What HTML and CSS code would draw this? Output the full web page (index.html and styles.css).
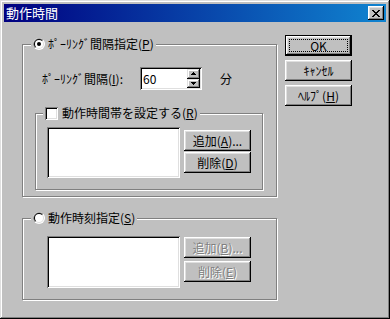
FILE: index.html
```html
<!DOCTYPE html>
<html lang="ja">
<head>
<meta charset="utf-8">
<title>動作時間</title>
<link rel="stylesheet" href="styles.css">
</head>
<body>
<div class="window">
  <div class="titlebar">
    <span class="title">動作時間</span>
    <span class="close">
      <svg width="8" height="7" viewBox="0 0 8 7" shape-rendering="crispEdges"><path d="M0 0h2v1H0zM6 0h2v1H6zM1 1h2v1H1zM5 1h2v1H5zM2 2h4v1H2zM3 3h2v1H3zM2 4h4v1H2zM1 5h2v1H1zM5 5h2v1H5zM0 6h2v1H0zM6 6h2v1H6z" fill="#000"/></svg>
    </span>
  </div>
  <div class="body">
    <div class="left">
      <div class="group g1">
        <div class="legend">
          <svg class="radio" width="12" height="12" viewBox="0 0 12 12"><circle cx="6" cy="6" r="6" fill="#fff"/><path d="M1.76 10.24A6 6 0 0 1 10.24 1.76L6 6Z" fill="#808080"/><circle cx="6" cy="6" r="5" fill="#dfdfdf"/><path d="M2.46 9.54A5 5 0 0 1 9.54 2.46L6 6Z" fill="#000"/><circle cx="6" cy="6" r="4" fill="#fff"/><circle cx="6" cy="6" r="2" fill="#000"/></svg>
          <span class="txt">ﾎﾟｰﾘﾝｸﾞ間隔指定(<u>P</u>)</span>
        </div>
        <div class="row">
          <span class="lbl">ﾎﾟｰﾘﾝｸﾞ間隔(<u>I</u>):</span>
          <div class="edit">
            <span class="val">60</span>
            <div class="spin">
              <span class="sb up"><svg width="5" height="3" viewBox="0 0 5 3" shape-rendering="crispEdges"><path d="M2 0h1v1H2zM1 1h3v1H1zM0 2h5v1H0z" fill="#000"/></svg></span>
              <span class="sb down"><svg width="5" height="3" viewBox="0 0 5 3" shape-rendering="crispEdges"><path d="M0 0h5v1H0zM1 1h3v1H1zM2 2h1v1H2z" fill="#000"/></svg></span>
            </div>
          </div>
          <span class="unit">分</span>
        </div>
        <div class="group inner">
          <div class="legend cb-legend">
            <span class="checkbox"></span>
            <span class="txt">動作時間帯を設定する(<u>R</u>)</span>
          </div>
          <div class="content c1">
            <div class="listbox lb1"></div>
            <div class="btncol b1">
              <span class="btn">追加(<u>A</u>)...</span>
              <span class="btn">削除(<u>D</u>)</span>
            </div>
          </div>
        </div>
      </div>
      <div class="group g2">
        <div class="legend">
          <svg class="radio" width="12" height="12" viewBox="0 0 12 12"><circle cx="6" cy="6" r="6" fill="#fff"/><path d="M1.76 10.24A6 6 0 0 1 10.24 1.76L6 6Z" fill="#808080"/><circle cx="6" cy="6" r="5" fill="#dfdfdf"/><path d="M2.46 9.54A5 5 0 0 1 9.54 2.46L6 6Z" fill="#000"/><circle cx="6" cy="6" r="4" fill="#fff"/></svg>
          <span class="txt">動作時刻指定(<u>S</u>)</span>
        </div>
        <div class="content c2">
          <div class="listbox lb2"></div>
          <div class="btncol b2">
            <span class="btn disabled">追加(<u>B</u>)...</span>
            <span class="btn disabled">削除(<u>E</u>)</span>
          </div>
        </div>
      </div>
    </div>
    <div class="right">
      <span class="btn default"><span class="focus">OK</span></span>
      <span class="btn">ｷｬﾝｾﾙ</span>
      <span class="btn">ﾍﾙﾌﾟ(<u>H</u>)</span>
    </div>
  </div>
</div>
</body>
</html>
```

FILE: styles.css
```css
* { box-sizing: border-box; }

body {
  margin: 0;
  background: #fff;
  font-family: "Noto Sans CJK JP", "Noto Sans", sans-serif;
  font-size: 12px;
  line-height: 14px;
  color: #000;
}

.window {
  width: 390px;
  height: 319px;
  background: #c0c0c0;
  padding: 4px;
  box-shadow: inset -1px -1px #000, inset 1px 1px #dfdfdf, inset -2px -2px #808080, inset 2px 2px #fff;
  display: flex;
  flex-direction: column;
}

.titlebar {
  height: 18px;
  background: linear-gradient(to right, #000080, #1084d0);
  display: flex;
  align-items: center;
  justify-content: space-between;
  padding: 0 2px;
  color: #fff;
}

.title {
  line-height: 16px;
  font-size: 13px;
}

.close {
  width: 16px;
  height: 14px;
  background: #c0c0c0;
  box-shadow: inset -1px -1px #000, inset 1px 1px #fff, inset -2px -2px #808080, inset 2px 2px #dfdfdf;
  display: flex;
  align-items: center;
  justify-content: center;
  padding-right: 1px;
}

.body {
  display: flex;
  padding-left: 18px;
}

.left {
  width: 255px;
  padding-top: 22px;
}

.right {
  margin-left: 8px;
  padding-top: 13px;
  display: flex;
  flex-direction: column;
  gap: 4px;
}

.btn {
  width: 67px;
  height: 21px;
  background: #c0c0c0;
  box-shadow: inset -1px -1px #000, inset 1px 1px #fff, inset -2px -2px #808080, inset 2px 2px #dfdfdf;
  display: flex;
  align-items: center;
  justify-content: center;
  white-space: nowrap;
}

.btn.default {
  border: 1px solid #000;
  padding: 3px;
}

.btn .focus {
  flex: 1;
  align-self: stretch;
  border: 1px dotted #000;
  display: flex;
  align-items: center;
  justify-content: center;
}

.btn.disabled {
  color: #808080;
  text-shadow: 1px 1px #fff;
}

.group {
  border: 1px solid #808080;
  box-shadow: inset 1px 1px #fff, 1px 1px #fff;
}

.g1 { height: 153px; }

.g2 {
  height: 82px;
  margin-top: 21px;
}

.legend {
  display: flex;
  align-items: center;
  gap: 3px;
  width: max-content;
  height: 18px;
  margin-top: -10px;
  margin-left: 8px;
  padding: 0 2px;
  background: #c0c0c0;
  white-space: nowrap;
}

.radio { display: block; flex: none; }

.row {
  display: flex;
  align-items: center;
  height: 23px;
  margin-top: 14px;
  padding-left: 19px;
}

.lbl { width: 98px; white-space: nowrap; }

.edit {
  width: 62px;
  height: 23px;
  background: #fff;
  box-shadow: inset 1px 1px #808080, inset -1px -1px #fff, inset 2px 2px #000, inset -2px -2px #dfdfdf;
  display: flex;
  padding: 2px 2px 2px 3px;
}

.edit .val {
  flex: 1;
  line-height: 19px;
}

.spin {
  width: 13px;
  display: flex;
  flex-direction: column;
}

.sb {
  flex: 1;
  background: #c0c0c0;
  box-shadow: inset -1px -1px #000, inset 1px 1px #dfdfdf, inset -2px -2px #808080, inset 2px 2px #fff;
  display: flex;
  align-items: center;
  justify-content: center;
}

.sb svg { display: block; }

.unit { margin-left: 18px; }

.inner {
  width: 228px;
  height: 77px;
  margin-top: 23px;
  margin-left: 12px;
}

.cb-legend {
  margin-left: 7px;
  gap: 4px;
}

.checkbox {
  width: 13px;
  height: 13px;
  flex: none;
  background: #fff;
  box-shadow: inset 1px 1px #808080, inset -1px -1px #fff, inset 2px 2px #000, inset -2px -2px #dfdfdf;
}

.content { display: flex; }

.c1 {
  margin-top: 5px;
  margin-left: 11px;
}

.c2 {
  margin-top: 9px;
  margin-left: 24px;
}

.listbox {
  width: 133px;
  background: #fff;
  box-shadow: inset 1px 1px #808080, inset -1px -1px #fff, inset 2px 2px #000, inset -2px -2px #dfdfdf;
}

.lb1 { height: 51px; }
.lb2 { height: 52px; }

.btncol {
  margin-left: 4px;
  display: flex;
  flex-direction: column;
}

.b1 { padding-top: 3px; gap: 1px; }
.b2 { padding-top: 1px; gap: 3px; }
```
